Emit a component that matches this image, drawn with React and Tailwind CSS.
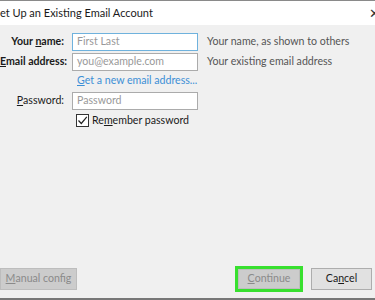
import React from "react";

export default function App() {
  const font = { fontFamily: 'Lato, "Noto Sans", sans-serif' };
  return (
    <div
      className="w-[375px] h-[300px] overflow-hidden flex flex-col bg-[#f0f0f0] text-[10.6px] text-[#1a1a1a]"
      style={font}
    >
      <div className="h-px bg-[#8a8a8a]" />
      <div className="h-[24px] bg-white flex items-center justify-between overflow-hidden">
        <span className="ml-[-6px] text-[11px] text-[#1a1a1a] whitespace-nowrap">Set Up an Existing Email Account</span>
        <span className="mr-[-5px] text-[13px] leading-none text-[#333]">✕</span>
      </div>
      <div className="flex-1 flex flex-col pt-[8px]">
        <div className="grid grid-cols-[64px_126px_1fr] gap-x-[8px] items-center">
          <div className="text-right font-bold whitespace-nowrap">
            Your <span className="underline">n</span>ame:
          </div>
          <div className="h-[18px] border border-[#6fb2dd] bg-white flex items-center px-[4px] text-[#999]">First Last</div>
          <div className="pl-[1px] text-[#555] whitespace-nowrap">Your name, as shown to others</div>

          <div className="mt-[2px] text-right font-bold whitespace-nowrap">
            <span className="underline">E</span>mail address:
          </div>
          <div className="mt-[2px] h-[18px] border border-[#ababab] bg-white flex items-center px-[4px] text-[#999]">you@example.com</div>
          <div className="mt-[2px] pl-[1px] text-[#555] whitespace-nowrap">Your existing email address</div>

          <div />
          <div className="mt-[1px] h-[17px] pl-[5px] text-[#3c8fd6] whitespace-nowrap leading-[17px]">
            <span className="underline">G</span>et a new email address...
          </div>
          <div />

          <div className="mt-[3px] text-right whitespace-nowrap">
            <span className="underline">P</span>assword:
          </div>
          <div className="mt-[3px] h-[18px] border border-[#ababab] bg-white flex items-center px-[4px] text-[#999]">Password</div>
          <div />

          <div />
          <div className="mt-[3px] flex items-center gap-[3px] pl-[4px] whitespace-nowrap">
            <span className="w-[13px] h-[13px] border border-[#333] bg-white flex items-center justify-center">
              <svg width="11" height="11" viewBox="0 0 11 11">
                <path d="M1.5 5.5 L4.3 8.5 L9.8 1.8" fill="none" stroke="#222" strokeWidth="1.2" />
              </svg>
            </span>
            <span>
              Re<span className="underline">m</span>ember password
            </span>
          </div>
          <div />
        </div>
        <div className="mt-auto mb-[6px] flex items-center">
          <div className="h-[22px] w-[77px] bg-[#cccccc] border border-[#bdbdbd] flex items-center justify-center text-[#8a8a8a] whitespace-nowrap">
            <span className="underline">M</span>anual config
          </div>
          <div className="ml-auto mr-[8px] border-[3px] border-[#38e02f] p-0">
            <div className="h-[20px] w-[62px] bg-[#cccccc] border border-[#bdbdbd] flex items-center justify-center text-[#8a8a8a]">
              <span className="underline">C</span>ontinue
            </div>
          </div>
          <div className="mr-[3px] h-[22px] w-[61px] bg-[#e1e1e1] border border-[#adadad] flex items-center justify-center text-[#1a1a1a]">
            Ca<span className="underline">n</span>cel
          </div>
        </div>
      </div>
      <div className="h-[2px] bg-[#777]" />
    </div>
  );
}
